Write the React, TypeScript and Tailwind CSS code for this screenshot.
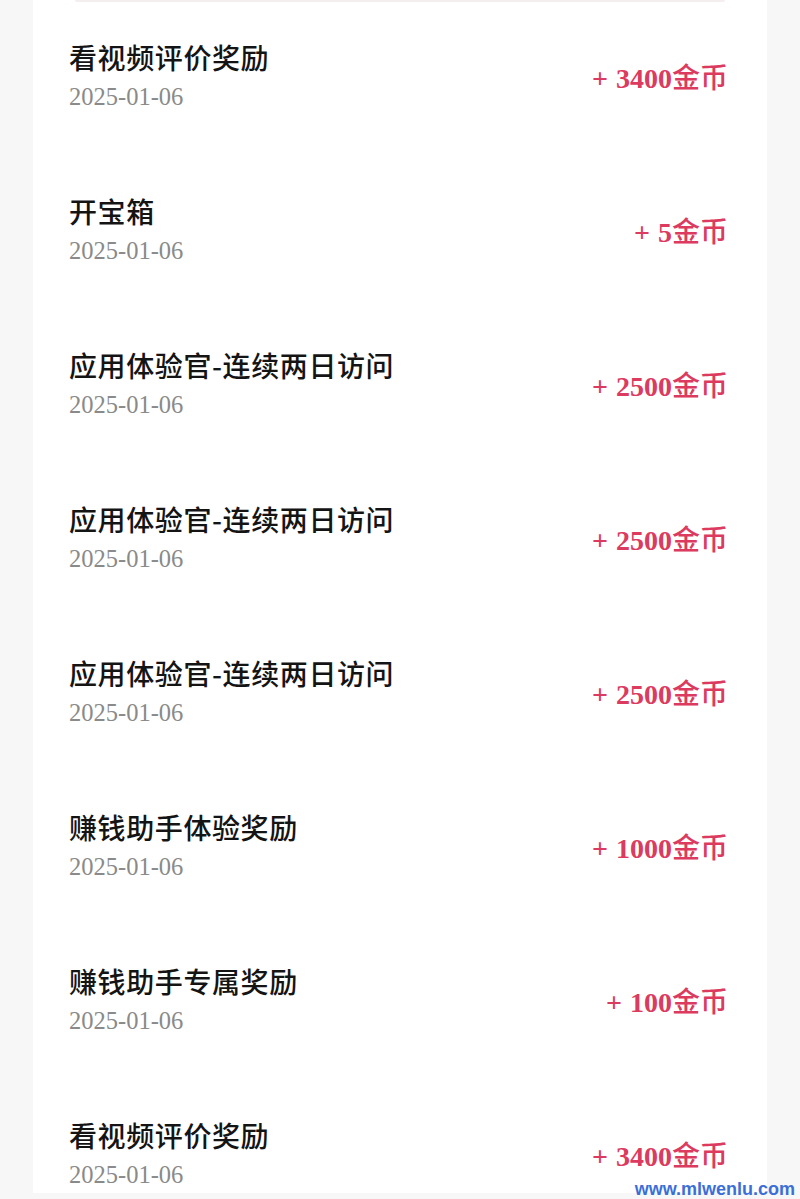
const records = [
  { id: 1, title: '看视频评价奖励', date: '2025-01-06', amount: 3400 },
  { id: 2, title: '开宝箱', date: '2025-01-06', amount: 5 },
  { id: 3, title: '应用体验官-连续两日访问', date: '2025-01-06', amount: 2500 },
  { id: 4, title: '应用体验官-连续两日访问', date: '2025-01-06', amount: 2500 },
  { id: 5, title: '应用体验官-连续两日访问', date: '2025-01-06', amount: 2500 },
  { id: 6, title: '赚钱助手体验奖励', date: '2025-01-06', amount: 1000 },
  { id: 7, title: '赚钱助手专属奖励', date: '2025-01-06', amount: 100 },
  { id: 8, title: '看视频评价奖励', date: '2025-01-06', amount: 3400 }
];

const cjk = "font-['Noto_Sans_CJK_SC',sans-serif]";
const serif = "font-['Liberation_Serif','Noto_Sans_CJK_SC',serif]";

const App = () => {
  return (
    <div className="relative h-[1199px] overflow-hidden bg-[#f7f7f7] px-[33px]">
      <div className="h-[1193px] overflow-hidden bg-white">
        <div className="mx-[42px] h-[2px] rounded-b bg-[#f4eeef]" />
        <div className="-mt-[2px]">
          {records.map((r) => (
            <div key={r.id} className="flex h-[154px] items-center justify-between pl-[36px] pr-[39px]">
              <div>
                <div className={`${cjk} text-[28px] font-medium leading-[39px] tracking-[0.6px] text-[#141414]`}>
                  {r.title}
                </div>
                <div className={`${serif} text-[24.5px] leading-[39px] text-[#8a8a8a]`}>{r.date}</div>
              </div>
              <div className={`${serif} text-[28px] font-bold leading-[39px] text-[#dc3a5e]`}>
                <span className="mr-[8px]">+</span>
                {r.amount}
                <span className={`${cjk} font-medium`}>金币</span>
              </div>
            </div>
          ))}
        </div>
      </div>
      <div className="absolute bottom-[1px] right-[5px] font-['Liberation_Sans',sans-serif] text-[18px] font-bold leading-none text-[#3b6fd7]">
        www.mlwenlu.com
      </div>
    </div>
  );
};

export default App;
